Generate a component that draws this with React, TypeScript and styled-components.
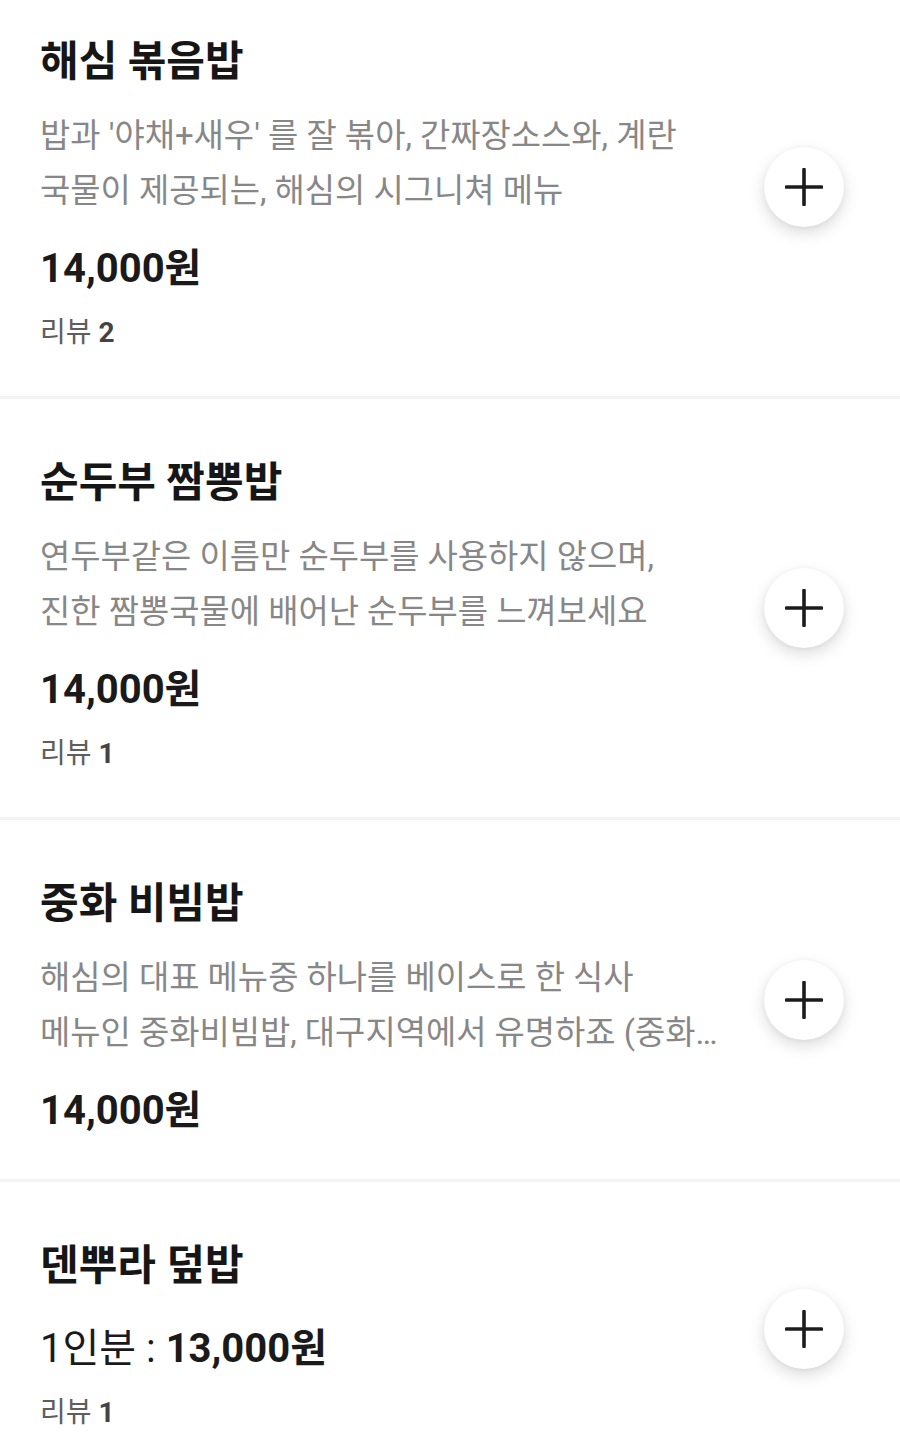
import React from "react";
import styled, { createGlobalStyle } from "styled-components";

interface MenuItem {
  id: number;
  name: string;
  description?: string;
  unit?: string;
  price: string;
  reviews?: number;
}

const menu: MenuItem[] = [
  {
    id: 1,
    name: "해심 볶음밥",
    description: "밥과 '야채+새우' 를 잘 볶아, 간짜장소스와, 계란 국물이 제공되는, 해심의 시그니쳐 메뉴",
    price: "14,000원",
    reviews: 2,
  },
  {
    id: 2,
    name: "순두부 짬뽕밥",
    description: "연두부같은 이름만 순두부를 사용하지 않으며, 진한 짬뽕국물에 배어난 순두부를 느껴보세요",
    price: "14,000원",
    reviews: 1,
  },
  {
    id: 3,
    name: "중화 비빔밥",
    description:
      "해심의 대표 메뉴중 하나를 베이스로 한 식사 메뉴인 중화비빔밥, 대구지역에서 유명하죠 (중화 비빔밥은 매콤한 소스에 해산물과 야채를 볶아 밥과 비벼먹는 메뉴입니다)",
    price: "14,000원",
  },
  {
    id: 4,
    name: "덴뿌라 덮밥",
    unit: "1인분",
    price: "13,000원",
    reviews: 1,
  },
];

const GlobalStyle = createGlobalStyle`
  body {
    margin: 0;
    background: #ffffff;
    font-family: Roboto, "Noto Sans CJK KR", sans-serif;
    -webkit-font-smoothing: antialiased;
  }
`;

const App: React.FC = () => {
  return (
    <>
      <GlobalStyle />
      <List>
        {menu.map((item) => (
          <Row key={item.id}>
            <Info>
              <Name>{item.name}</Name>
              {item.description && <Description>{item.description}</Description>}
              <Price>
                {item.unit && <Unit>{item.unit} : </Unit>}
                {item.price}
              </Price>
              {item.reviews !== undefined && (
                <Review>
                  리뷰 <b>{item.reviews}</b>
                </Review>
              )}
            </Info>
            <AddButton aria-label="담기">
              <svg width="38" height="38" viewBox="0 0 38 38" fill="none">
                <path d="M19 1.5v35M1.5 19h35" stroke="#1c1c1c" strokeWidth="3.6" strokeLinecap="round" />
              </svg>
            </AddButton>
          </Row>
        ))}
      </List>
    </>
  );
};

const List = styled.div`
  margin-top: -22px;
  overflow: hidden;
`;

const Row = styled.div`
  display: flex;
  align-items: center;
  padding: 0 56px 0 40px;
  border-bottom: 3px solid #f3f3f3;
`;

const Info = styled.div`
  flex: 1;
  min-width: 0;
  max-width: 678px;
  margin-right: auto;
  padding: 56px 0 43px;
`;

const Name = styled.div`
  font-size: 42px;
  font-weight: 700;
  line-height: 56px;
  color: #161616;
`;

const Description = styled.div`
  margin-top: 18px;
  font-size: 32.9px;
  line-height: 55px;
  color: #878787;
  word-break: keep-all;
  display: -webkit-box;
  -webkit-line-clamp: 2;
  -webkit-box-orient: vertical;
  overflow: hidden;
`;

const Price = styled.div`
  margin-top: 26px;
  font-size: 40px;
  font-weight: 700;
  line-height: 50px;
  color: #1a1a1a;

  ${Name} + & {
    margin-top: 30px;
  }
`;

const Unit = styled.span`
  font-weight: 400;
`;

const Review = styled.div`
  margin-top: 19px;
  font-size: 28px;
  line-height: 40px;
  color: #5e5e5e;

  b {
    font-weight: 700;
    color: #444;
  }
`;

const AddButton = styled.button`
  flex: none;
  width: 80px;
  height: 80px;
  border: none;
  border-radius: 50%;
  background: #fff;
  display: flex;
  align-items: center;
  justify-content: center;
  padding: 0;
  margin-left: 20px;
  box-shadow: 0 6px 16px rgba(0, 0, 0, 0.14), 0 1px 4px rgba(0, 0, 0, 0.05);
  cursor: pointer;
`;

export default App;
